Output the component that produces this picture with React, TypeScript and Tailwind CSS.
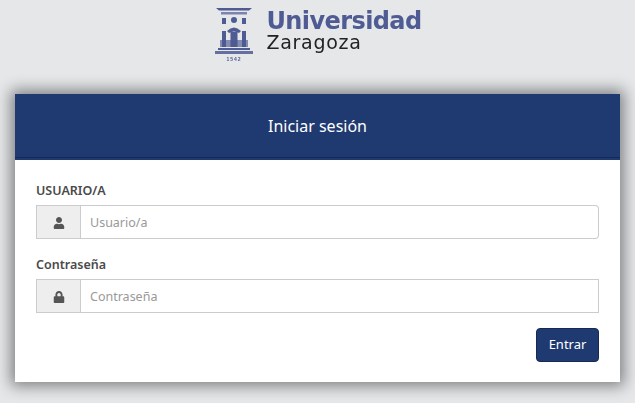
import React from 'react';
import { FaUser, FaLock } from 'react-icons/fa';

function Emblem() {
  const c = '#4f5b93';
  return (
    <svg width="38" height="54" viewBox="0 0 38 54" className="blur-[0.4px]">
      <path d="M1 1h36l-3 2.500H4z" fill={c} />
      <rect x="6" y="5" width="26" height="2.500" fill={c} opacity="0.7" />
      <rect x="7" y="11" width="4" height="6" fill={c} />
      <circle cx="19" cy="13" r="3" fill={c} />
      <rect x="27" y="11" width="4" height="6" fill={c} />
      <path d="M12 24q7-7 14 0l-2 2q-5-3-10 0z" fill={c} />
      <rect x="7" y="24" width="4" height="16" fill={c} />
      <rect x="15.500" y="25" width="7" height="15" fill={c} />
      <rect x="27" y="24" width="4" height="16" fill={c} />
      <rect x="5" y="33" width="28" height="7" fill={c} opacity="0.65" />
      <rect x="3" y="41" width="32" height="2" fill={c} />
      <rect x="0" y="44" width="38" height="3" fill={c} opacity="0.85" />
      <text x="19" y="53.500" fontSize="5" fontWeight="700" textAnchor="middle" letterSpacing="1" fill={c} fontFamily='"Liberation Sans", sans-serif'>1542</text>
    </svg>
  );
}

function Field({ label, placeholder, icon, rounded }: { label: string; placeholder: string; icon: React.ReactNode; rounded?: boolean }) {
  return (
    <div>
      <label className="block pt-px text-[12.5px] leading-[18px] font-semibold text-[#4a4a4a] mb-[5px]">{label}</label>
      <div className="flex h-[34px]">
        <span className="w-[45px] shrink-0 flex items-center justify-center pt-px bg-[#eeeeee] border border-[#cccccc] text-[#555555] text-[12px]">
          {icon}
        </span>
        <input
          placeholder={placeholder}
          className={`flex-1 min-w-0 border border-l-0 border-[#cccccc] bg-white pl-[9px] pr-[10px] pt-[2px] text-[12.5px] text-[#555555] placeholder:text-[#999999] outline-none ${rounded ? 'rounded-r-[4px]' : ''}`}
        />
      </div>
    </div>
  );
}

export default function App() {
  return (
    <div className="min-h-[403px] bg-[#e5e7e9] overflow-hidden font-['Noto_Sans','Open_Sans',sans-serif]">
      {/* Logo */}
      <div className="h-[94px] flex justify-center pt-[7px]">
        <div className="flex items-start gap-[13px] h-[54px] pl-[2px]">
          <Emblem />
          <div className="blur-[0.4px] pt-[3px]">
            <div className="font-['DejaVu_Sans',sans-serif] font-bold text-[#4f5b93] text-[24px] leading-[23px] tracking-[-0.6px]">Universidad</div>
            <div className="font-['DejaVu_Sans',sans-serif] text-[#222222] text-[19px] leading-[19px] tracking-[0.7px]">Zaragoza</div>
          </div>
        </div>
      </div>

      {/* Panel */}
      <div className="mx-[15px] h-[288px] bg-white shadow-[0_0_14px_4px_rgba(0,0,0,0.45)]">
        <div className="h-[66px] pb-[2px] bg-[#1f3a70] relative flex items-center justify-center">
          <h1 className="text-white text-[16px]">Iniciar sesión</h1>
          <div className="absolute left-0 right-0 bottom-[2px] h-px bg-[#16294f]" />
        </div>
        <div className="px-[21px] pt-[21px]">
          <div className="flex flex-col gap-[16px]">
            <Field label="USUARIO/A" placeholder="Usuario/a" rounded icon={<FaUser />} />
            <Field label="Contraseña" placeholder="Contraseña" icon={<FaLock />} />
          </div>
          <div className="flex justify-end mt-[15px]">
            <button className="h-[34px] w-[63px] rounded-[4px] bg-[#1f3a70] border border-[#16294f] text-white text-[13px]">Entrar</button>
          </div>
        </div>
      </div>
    </div>
  );
}
